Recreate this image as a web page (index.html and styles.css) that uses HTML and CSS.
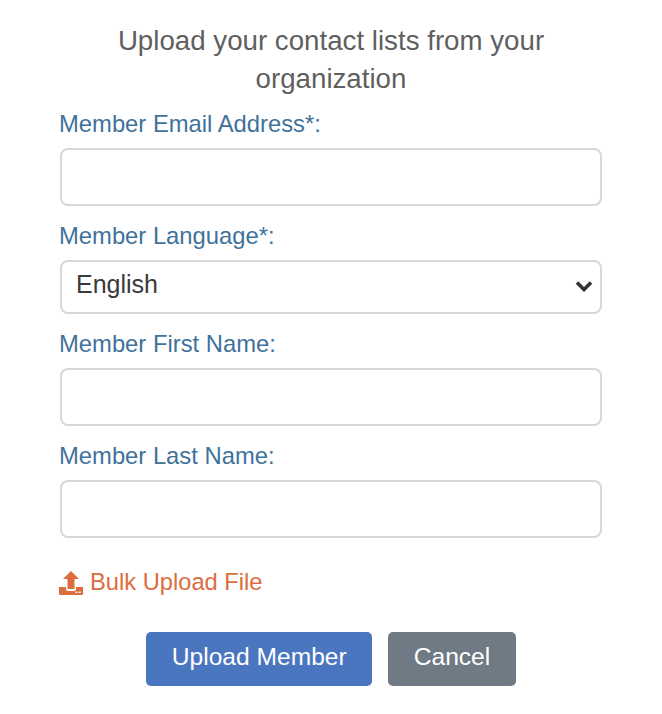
FILE: index.html
```html
<!DOCTYPE html>
<html lang="en">
<head>
<meta charset="utf-8">
<title>Upload Member</title>
<link rel="stylesheet" href="styles.css">
</head>
<body>
<form class="form">
  <h2 class="title">Upload your contact lists from your organization</h2>
  <div class="field">
    <label class="label">Member Email Address*:</label>
    <input class="control" type="text">
  </div>
  <div class="field">
    <label class="label">Member Language*:</label>
    <div class="select-wrap">
      <div class="control select">English</div>
      <svg class="chev" viewBox="0 0 18 12" width="18" height="12"><path d="M2 2.500l7 7 7-7" fill="none" stroke="#333" stroke-width="3.600"/></svg>
    </div>
  </div>
  <div class="field">
    <label class="label">Member First Name:</label>
    <input class="control" type="text">
  </div>
  <div class="field">
    <label class="label">Member Last Name:</label>
    <input class="control" type="text">
  </div>
  <a class="bulk">
    <svg class="bulk-icon" viewBox="0 0 24 24" width="24" height="24"><path fill="#dc6d3f" d="M8.500 18V8H4l8-8 8 8h-4.500v10z"/><path fill="#dc6d3f" fill-rule="evenodd" d="M0 16h7v2a2 2 0 0 0 2 2h6a2 2 0 0 0 2-2v-2h7v7a1 1 0 0 1-1 1H1a1 1 0 0 1-1-1zM16.500 20.500v1.500h2v-1.500zM19.700 20.500v1.500h2v-1.500z"/></svg>
    <span>Bulk Upload File</span>
  </a>
  <div class="actions">
    <button class="btn primary" type="button">Upload Member</button>
    <button class="btn secondary" type="button">Cancel</button>
  </div>
</form>
</body>
</html>
```
FILE: styles.css
```css
* { box-sizing: border-box; }
html, body { margin: 0; background: #fff; }
body { width: 662px; height: 714px; overflow: hidden; font-family: "Liberation Sans", Arial, sans-serif; }
.form { padding: 22px 60px 0; display: flex; flex-direction: column; }
.title { margin: 0 0 11px; font-size: 27.7px; line-height: 38px; font-weight: 400; color: #5f5f5f; text-align: center; padding: 0 40px; }
.field { display: flex; flex-direction: column; margin-bottom: 15px; }
.label { font-size: 23.8px; line-height: 30px; color: #3f729b; margin-bottom: 9px; margin-left: -1px; }
.control { display: block; width: 100%; height: 58px; border: 2px solid #d5d8da; border-radius: 8px; background: #fff; padding: 0 14px; font-family: inherit; font-size: 25px; color: #3a3a3a; }
.select-wrap { position: relative; }
.select { height: 54px; line-height: 44px; }
.chev { position: absolute; right: 9px; top: 20px; }
.bulk { display: flex; align-items: center; gap: 7px; margin-top: 16px; margin-left: -1px; font-size: 23.700px; color: #dc6d3f; }
.actions { display: flex; justify-content: center; gap: 16px; margin-top: 36px; }
.btn { height: 54px; border: 0; border-radius: 5px; color: #fff; font-family: inherit; font-size: 24.600px; padding: 0 25.500px 5px; }
.primary { background: #4a76c0; }
.secondary { background: #6f7a85; }
```
